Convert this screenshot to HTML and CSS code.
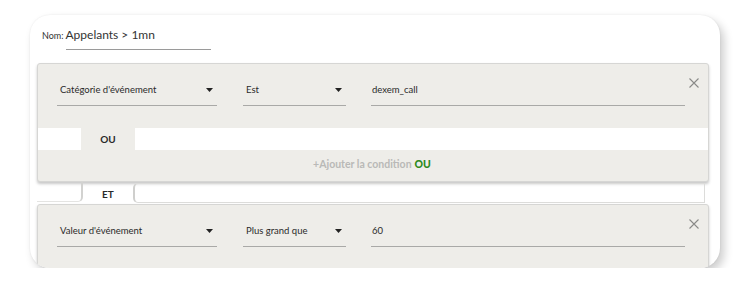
FILE: index.html
```html
<!DOCTYPE html>
<html lang="fr">
<head>
    <meta charset="UTF-8">
    <title>Règle - Appelants</title>
    <link rel="stylesheet" href="styles.css">
</head>
<body>
    <div class="card">
        <div class="rule-name">
            <span class="name-label">Nom:</span>
            <span class="name-input">Appelants &gt; 1mn</span>
        </div>

        <!-- premier groupe de conditions -->
        <div class="group">
            <div class="condition">
                <div class="field field-wide">
                    <span>Catégorie d'événement</span>
                    <svg class="caret" width="7" height="4" viewBox="0 0 7 4"><polygon points="0,0 7,0 3.5,4"></polygon></svg>
                </div>
                <div class="field field-op">
                    <span>Est</span>
                    <svg class="caret" width="7" height="4" viewBox="0 0 7 4"><polygon points="0,0 7,0 3.5,4"></polygon></svg>
                </div>
                <div class="field field-value">
                    <span>dexem_call</span>
                </div>
                <svg class="close" width="10" height="10" viewBox="0 0 10 10"><path d="M0.5 0.5 L9.5 9.5 M9.5 0.5 L0.5 9.5"></path></svg>
            </div>
            <div class="or-row">
                <div class="or-gap"></div>
                <div class="or-tab">OU</div>
                <div class="or-fill"></div>
            </div>
            <div class="add-row">+Ajouter la condition <b>OU</b></div>
        </div>

        <div class="and-row">
            <div class="and-left"></div>
            <div class="and-tab">ET</div>
            <div class="and-right"></div>
        </div>

        <!-- second groupe -->
        <div class="group">
            <div class="condition">
                <div class="field field-wide">
                    <span>Valeur d'événement</span>
                    <svg class="caret" width="7" height="4" viewBox="0 0 7 4"><polygon points="0,0 7,0 3.5,4"></polygon></svg>
                </div>
                <div class="field field-op">
                    <span>Plus grand que</span>
                    <svg class="caret" width="7" height="4" viewBox="0 0 7 4"><polygon points="0,0 7,0 3.5,4"></polygon></svg>
                </div>
                <div class="field field-value">
                    <span>60</span>
                </div>
                <svg class="close" width="10" height="10" viewBox="0 0 10 10"><path d="M0.5 0.5 L9.5 9.5 M9.5 0.5 L0.5 9.5"></path></svg>
            </div>
        </div>
    </div>
</body>
</html>
```

FILE: styles.css
```css
:root {
    --panel: #eeede9;
    --line: #a9a9a7;
    --text: #2a2a2a;
    --green: #2f8a1f;
}

body {
    margin: 0;
    background: #fff;
    font-family: Lato, 'Open Sans', sans-serif;
    color: var(--text);
}

.card {
    margin: 15px 0 0 30px;
    width: 690px;
    height: 253px;
    box-sizing: border-box;
    padding: 0 11px 0 7px;
    background: #fff;
    border-radius: 20px;
    box-shadow: 4px 5px 10px rgba(0, 0, 0, 0.2), 0 0 2px rgba(0, 0, 0, 0.08);
    overflow: hidden;
}

.rule-name {
    height: 48px;
    padding: 12px 0 0 5px;
    box-sizing: border-box;
    display: flex;
    align-items: flex-start;
}

.name-label {
    font-size: 9px;
    margin-top: 3px;
    margin-right: 2px;
    color: #333;
}

.name-input {
    width: 145px;
    font-size: 12px;
    padding-bottom: 7px;
    border-bottom: 1px solid #9a9a9a;
    color: #333;
}

.group {
    background: var(--panel);
    border: 1px solid #d6d6d4;
    border-radius: 3px;
    box-shadow: 0 2px 3px rgba(0, 0, 0, 0.22);
}

.condition {
    position: relative;
    height: 64px;
    box-sizing: border-box;
    padding: 19px 0 0 19px;
    display: flex;
    align-items: flex-start;
}

.field {
    display: flex;
    align-items: center;
    justify-content: space-between;
    height: 23px;
    box-sizing: border-box;
    padding: 0 4px 9px 3px;
    border-bottom: 1px solid var(--line);
    font-size: 9.5px;
    line-height: 14px;
    color: var(--text);
}

.field-wide {
    width: 160px;
}

.field-op {
    width: 103px;
    margin-left: 26px;
}

.field-value {
    width: 314px;
    margin-left: 25px;
    padding-left: 1px;
}

.caret {
    fill: #222;
}

.close {
    position: absolute;
    top: 14px;
    right: 9px;
    stroke: #8a8a88;
    stroke-width: 1.1;
}

.or-row {
    display: flex;
    height: 22px;
}

.or-gap {
    width: 43px;
    background: #fff;
}

.or-tab {
    width: 54px;
    background: var(--panel);
    font-size: 10px;
    font-weight: 700;
    display: flex;
    align-items: center;
    justify-content: center;
}

.or-fill {
    flex: 1;
    background: #fff;
}

.add-row {
    height: 31px;
    display: flex;
    align-items: center;
    justify-content: center;
    font-size: 10.5px;
    font-weight: 700;
    color: #b9b9b7;
    padding: 0 2px 3px 0;
    box-sizing: border-box;
}

.add-row b {
    color: var(--green);
    margin-left: 3px;
}

.and-row {
    display: flex;
    height: 22px;
}

.and-left {
    width: 44px;
    margin-bottom: 2px;
    border-right: 2px solid #d2d2d0;
    border-bottom: 1px solid #e4e4e2;
    border-bottom-right-radius: 5px;
}

.and-tab {
    width: 50px;
    font-size: 10px;
    font-weight: 700;
    display: flex;
    align-items: center;
    justify-content: center;
    padding-top: 2px;
}

.and-right {
    flex: 1;
    margin: 1px 4px 1px 0;
    border: 1px solid #dcdcda;
    border-left: 2px solid #cfcfcd;
    border-radius: 5px 0 0 5px;
}
```
